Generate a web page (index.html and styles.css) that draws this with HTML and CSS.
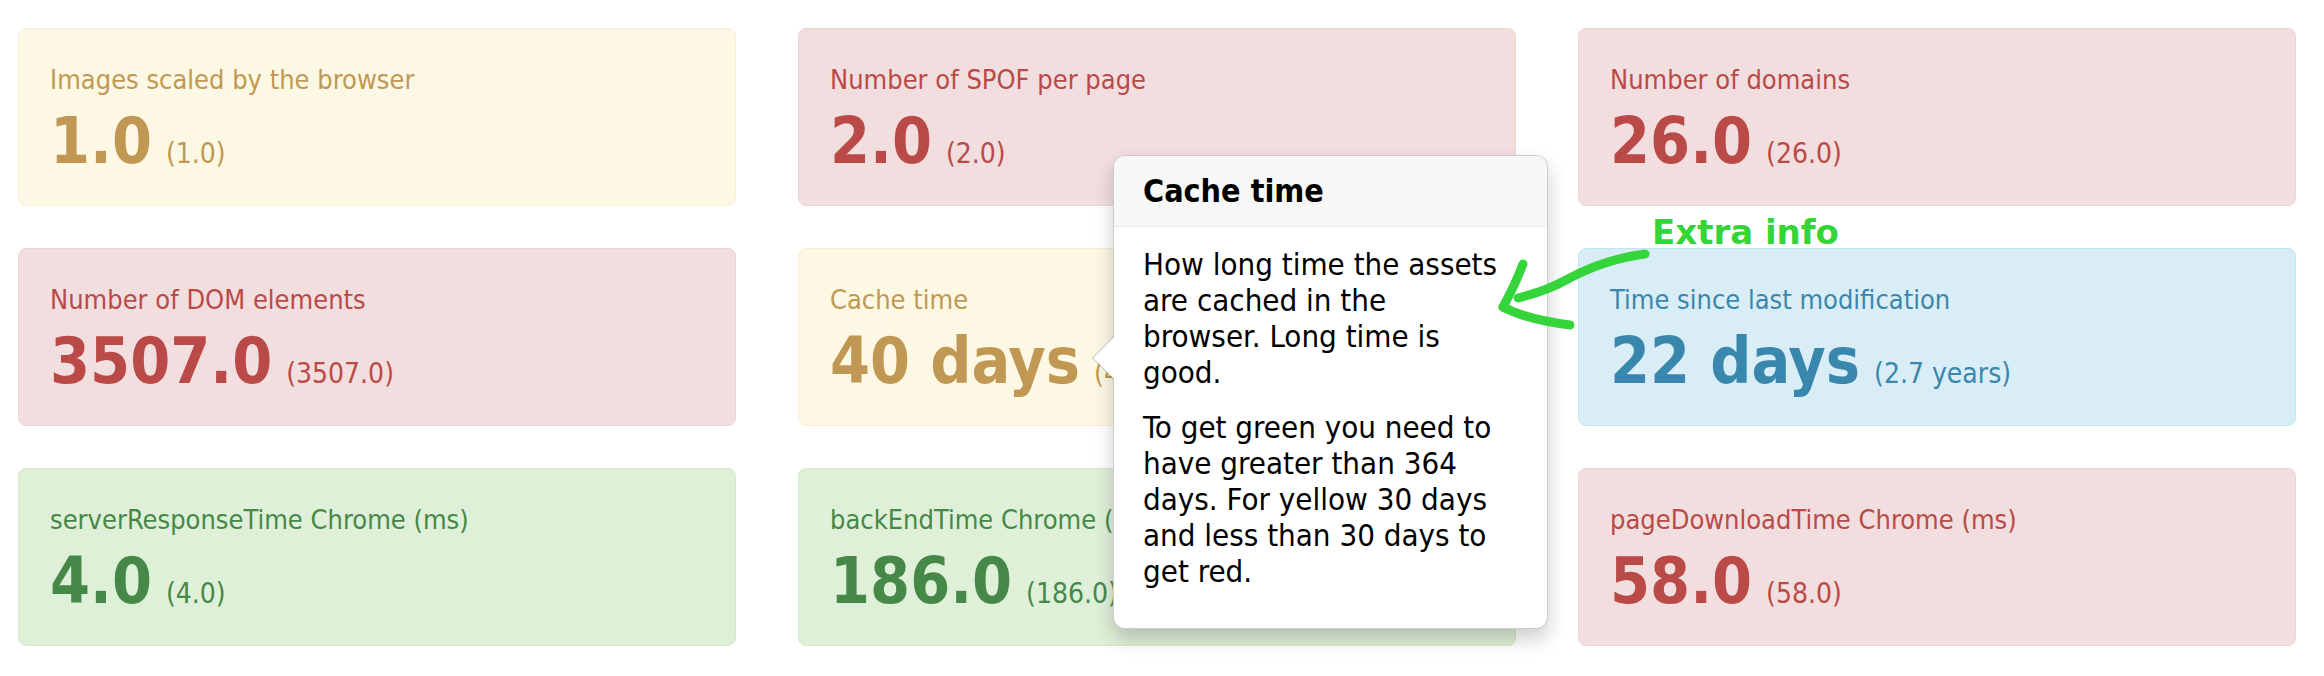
FILE: index.html
```html
<!DOCTYPE html>
<html lang="en">
<head>
<meta charset="utf-8">
<title>Summary</title>
<link rel="stylesheet" href="styles.css">
</head>
<body>
<main class="grid">
  <div class="stat warning">
    <div class="label">Images scaled by the browser</div>
    <div class="value"><span class="num">1.0</span><small> (1.0)</small></div>
  </div>
  <div class="stat error">
    <div class="label">Number of SPOF per page</div>
    <div class="value"><span class="num">2.0</span><small> (2.0)</small></div>
  </div>
  <div class="stat error">
    <div class="label">Number of domains</div>
    <div class="value"><span class="num">26.0</span><small> (26.0)</small></div>
  </div>
  <div class="stat error">
    <div class="label">Number of DOM elements</div>
    <div class="value"><span class="num">3507.0</span><small> (3507.0)</small></div>
  </div>
  <div class="stat warning">
    <div class="label">Cache time</div>
    <div class="value"><span class="num">40 days</span><small> (40 days)</small></div>
  </div>
  <div class="stat info">
    <div class="label">Time since last modification</div>
    <div class="value"><span class="num">22 days</span><small> (2.7 years)</small></div>
  </div>
  <div class="stat success">
    <div class="label">serverResponseTime Chrome (ms)</div>
    <div class="value"><span class="num">4.0</span><small> (4.0)</small></div>
  </div>
  <div class="stat success">
    <div class="label">backEndTime Chrome (ms)</div>
    <div class="value"><span class="num">186.0</span><small> (186.0)</small></div>
  </div>
  <div class="stat error">
    <div class="label">pageDownloadTime Chrome (ms)</div>
    <div class="value"><span class="num">58.0</span><small> (58.0)</small></div>
  </div>
</main>

<div class="popover">
  <div class="arrow"></div>
  <h3 class="popover-title">Cache time</h3>
  <div class="popover-content">
    <p>How long time the assets<br>are cached in the<br>browser. Long time is<br>good.</p>
    <p>To get green you need to<br>have greater than 364<br>days. For yellow 30 days<br>and less than 30 days to<br>get red.</p>
  </div>
</div>

<div class="note">Extra info</div>
<svg class="note-arrow" width="2324" height="676" viewBox="0 0 2324 676" aria-hidden="true">
  <g fill="none" stroke="#35d43a" stroke-width="9" stroke-linecap="round" stroke-linejoin="round">
    <path d="M1645 254 C1612 258 1588 268 1566 280 C1550 289 1534 294 1518 298"/>
    <path d="M1523 264 C1517 280 1510 294 1503 307"/>
    <path d="M1503 307 C1520 316 1546 322 1570 325"/>
  </g>
</svg>
</body>
</html>
```

FILE: styles.css
```css
html, body {
  margin: 0;
  padding: 0;
  background: #ffffff;
}

body {
  font-family: "DejaVu Sans Condensed", "DejaVu Sans", sans-serif;
  font-stretch: condensed;
  position: relative;
  width: 2324px;
  height: 676px;
  overflow: hidden;
}

.grid {
  display: grid;
  grid-template-columns: repeat(3, 718px);
  column-gap: 62px;
  row-gap: 42px;
  padding: 28px 0 0 18px;
}

.stat {
  box-sizing: border-box;
  height: 178px;
  padding: 33px 31px 0;
  border: 1px solid;
  border-radius: 8px;
}

.label {
  font-size: 27px;
  line-height: 36px;
  white-space: nowrap;
}

.value {
  font-size: 64px;
  font-weight: bold;
  line-height: 86px;
  white-space: pre;
}

.value small {
  font-size: 28px;
  font-weight: normal;
  line-height: 1;
  margin-left: 6px;
}

.warning {
  background: #fcf8e3;
  border-color: #fbeed5;
  color: #c09853;
}

.error {
  background: #f2dede;
  border-color: #eed3d7;
  color: #b94a48;
}

.success {
  background: #dff0d8;
  border-color: #d6e9c6;
  color: #468847;
}

.info {
  background: #d9edf7;
  border-color: #bce8f1;
  color: #3a87ad;
}

.popover {
  position: absolute;
  left: 1113px;
  top: 155px;
  width: 435px;
  box-sizing: border-box;
  background: #ffffff;
  border: 1px solid rgba(0, 0, 0, 0.2);
  border-radius: 12px;
  box-shadow: 0 10px 20px rgba(0, 0, 0, 0.2);
  color: #000000;
}

.popover .arrow {
  position: absolute;
  left: -22px;
  top: 180px;
  width: 0;
  height: 0;
  border-style: solid;
  border-width: 22px 22px 22px 0;
  border-color: transparent rgba(0, 0, 0, 0.25) transparent transparent;
}

.popover .arrow::after {
  content: "";
  position: absolute;
  left: 1px;
  top: -21px;
  border-style: solid;
  border-width: 21px 21px 21px 0;
  border-color: transparent #ffffff transparent transparent;
}

.popover-title {
  margin: 0;
  padding: 15px 29px;
  font-size: 32px;
  line-height: 40px;
  font-weight: bold;
  background: #f7f7f7;
  border-bottom: 1px solid #ebebeb;
  border-radius: 11px 11px 0 0;
}

.popover-content {
  padding: 19px 29px 20px;
  font-size: 31px;
  line-height: 36px;
}

.popover-content p {
  margin: 0 0 19px;
  white-space: nowrap;
}

.note {
  position: absolute;
  left: 1652px;
  top: 215px;
  font-family: "DejaVu Sans", sans-serif;
  font-stretch: normal;
  font-weight: bold;
  font-size: 34px;
  line-height: 34px;
  color: #33d537;
  white-space: nowrap;
}

.note-arrow {
  position: absolute;
  left: 0;
  top: 0;
  pointer-events: none;
}
```
